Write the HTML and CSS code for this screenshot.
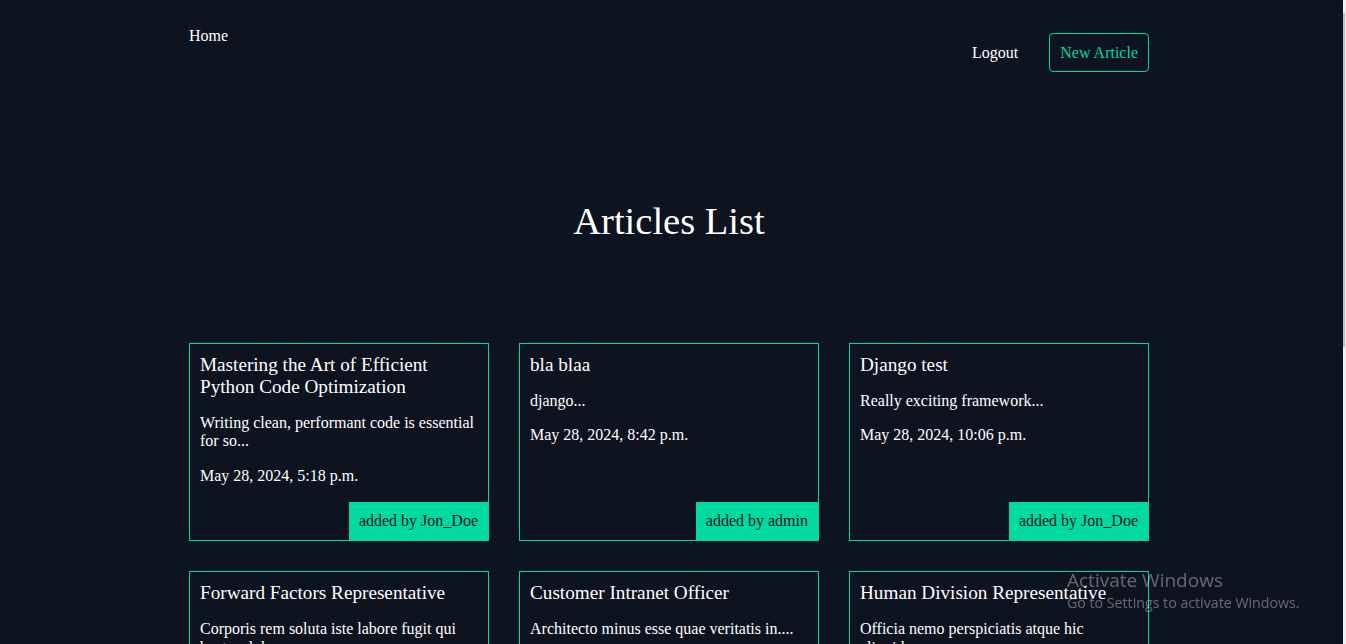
FILE: index.html
```html
<!DOCTYPE html>
<html lang="en">
<head>
<meta charset="utf-8">
<title>Articles List</title>
<link rel="stylesheet" href="styles.css">
</head>
<body>
<div class="page">
  <header class="header">
    <a class="home" href="#">Home</a>
    <nav class="nav">
      <a class="logout" href="#">Logout</a>
      <a class="btn-new" href="#">New Article</a>
    </nav>
  </header>

  <h1 class="title">Articles List</h1>

  <section class="grid">
    <article class="card">
      <h2 class="card-title">Mastering the Art of Efficient Python Code Optimization</h2>
      <p class="card-text">Writing clean, performant code is essential for so...</p>
      <p class="card-text card-date">May 28, 2024, 5:18 p.m.</p>
      <span class="badge">added by Jon_Doe</span>
    </article>
    <article class="card">
      <h2 class="card-title">bla blaa</h2>
      <p class="card-text">django...</p>
      <p class="card-text card-date">May 28, 2024, 8:42 p.m.</p>
      <span class="badge">added by admin</span>
    </article>
    <article class="card">
      <h2 class="card-title">Django test</h2>
      <p class="card-text">Really exciting framework...</p>
      <p class="card-text card-date">May 28, 2024, 10:06 p.m.</p>
      <span class="badge">added by Jon_Doe</span>
    </article>
    <article class="card">
      <h2 class="card-title">Forward Factors Representative</h2>
      <p class="card-text">Corporis rem soluta iste labore fugit qui beatae dolor...</p>
      <p class="card-text card-date">May 28, 2024, 10:20 p.m.</p>
      <span class="badge">added by admin</span>
    </article>
    <article class="card">
      <h2 class="card-title">Customer Intranet Officer</h2>
      <p class="card-text">Architecto minus esse quae veritatis in....</p>
      <p class="card-text card-date">May 28, 2024, 10:20 p.m.</p>
      <span class="badge">added by admin</span>
    </article>
    <article class="card">
      <h2 class="card-title">Human Division Representative</h2>
      <p class="card-text">Officia nemo perspiciatis atque hic aliquid...</p>
      <p class="card-text card-date">May 28, 2024, 10:20 p.m.</p>
      <span class="badge">added by admin</span>
    </article>
  </section>
</div>

<div class="watermark">
  <div class="wm-title">Activate Windows</div>
  <div class="wm-sub">Go to Settings to activate Windows.</div>
</div>
<div class="scrollbar"><div class="thumb"></div></div>
</body>
</html>
```

FILE: styles.css
```css
html {
  overflow: hidden;
  background: #0e1320;
}
body {
  margin: 0;
  padding: 0 8px 0 0;
  background: #0e1320;
  color: #ffffff;
  font-family: "Liberation Serif", "Times New Roman", serif;
  font-size: 16px;
}
a {
  text-decoration: none;
  color: inherit;
}
.page {
  width: 960px;
  margin: 0 auto;
}
.header {
  display: flex;
  justify-content: space-between;
  align-items: flex-start;
  padding-top: 27px;
}
.home {
  line-height: 18px;
}
.nav {
  display: flex;
  align-items: center;
  gap: 30px;
  margin-top: 6px;
}
.logout {
  margin-right: 1px;
}
.btn-new {
  color: #00d9a0;
  border: 1px solid #00d9a0;
  border-radius: 4px;
  padding: 10px 10px;
  line-height: 17px;
}
.title {
  margin: 127px 0 0;
  text-align: center;
  font-weight: normal;
  font-size: 38.5px;
  line-height: 44px;
}
.grid {
  display: grid;
  grid-template-columns: repeat(3, 300px);
  gap: 30px;
  margin-top: 100px;
}
.card {
  display: flex;
  flex-direction: column;
  border: 1px solid #00d9a0;
  padding: 10px 10px 0;
}
.card-title {
  margin: 0 0 16px;
  font-weight: normal;
  font-size: 19.2px;
  line-height: 22px;
}
.card-text {
  margin: 0 0 16px;
  line-height: 18.4px;
}
.card-date {
  margin-bottom: 17px;
}
.badge {
  margin: auto -10px 0 auto;
  background: #00d9a0;
  color: #0e1320;
  padding: 10px 10px;
  line-height: 18px;
}
.watermark {
  position: fixed;
  left: 1067px;
  top: 568px;
  color: rgba(255, 255, 255, 0.36);
  font-family: "Open Sans", "Noto Sans", sans-serif;
}
.wm-title {
  font-size: 19px;
  line-height: 24px;
}
.wm-sub {
  font-size: 14.2px;
  line-height: 22px;
}
.scrollbar {
  position: fixed;
  top: 0;
  right: 0;
  width: 3px;
  height: 100%;
  background: #f0f0f0;
}
.thumb {
  position: absolute;
  top: 13px;
  left: 0;
  width: 2px;
  height: 334px;
  background: #c1c1c1;
}
```
